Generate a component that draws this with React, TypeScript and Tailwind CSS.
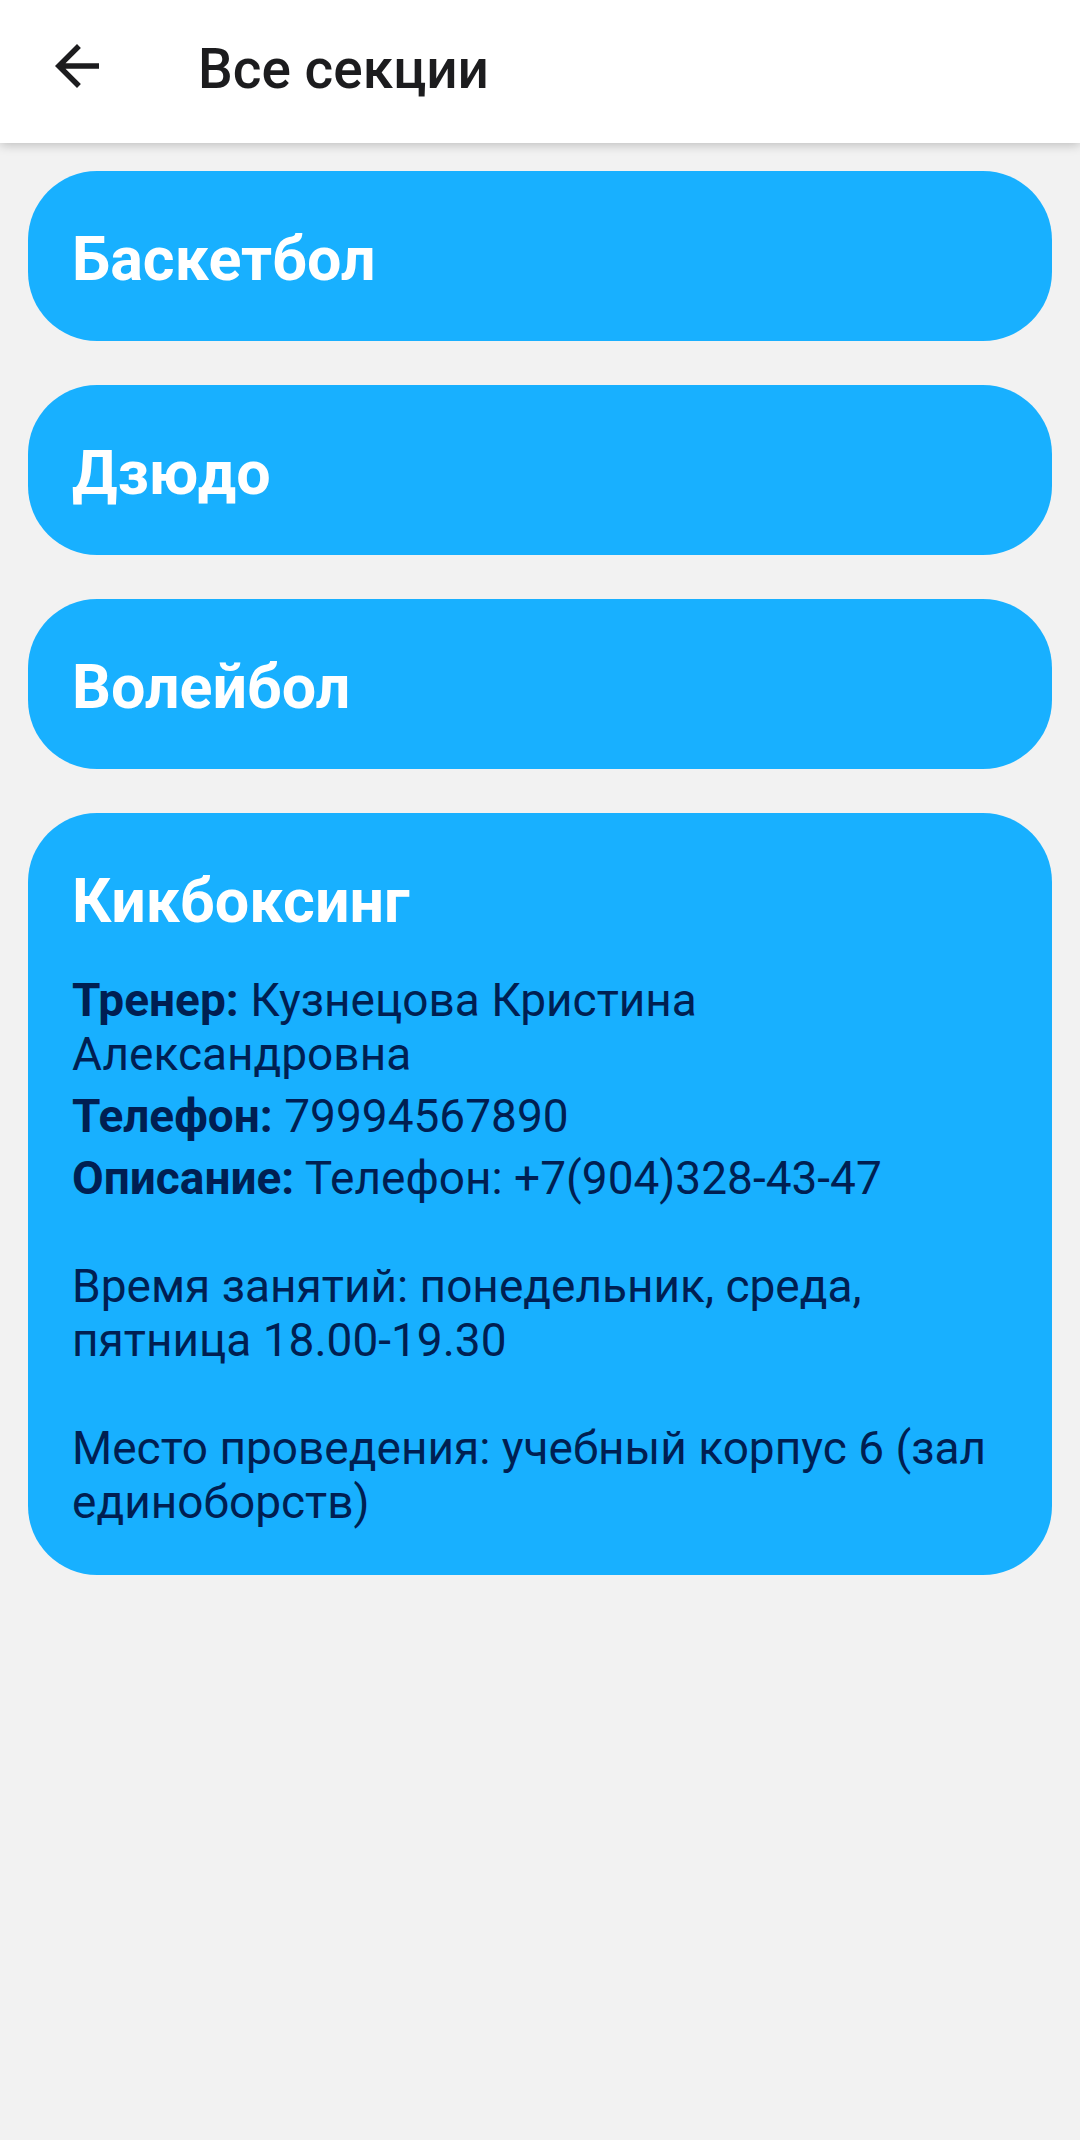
import type { ReactNode } from "react";

type Detail = { label: string; value: string };

const sections: { name: string; details?: Detail[] }[] = [
  { name: "Баскетбол" },
  { name: "Дзюдо" },
  { name: "Волейбол" },
  {
    name: "Кикбоксинг",
    details: [
      { label: "Тренер:", value: "Кузнецова Кристина Александровна" },
      { label: "Телефон:", value: "79994567890" },
      {
        label: "Описание:",
        value:
          "Телефон: +7(904)328-43-47\n\nВремя занятий: понедельник, среда, пятница 18.00-19.30\n\nМесто проведения: учебный корпус 6 (зал единоборств)",
      },
    ],
  },
];

function Card({ name, children }: { name: string; children?: ReactNode }) {
  return (
    <section className="rounded-[69px] bg-[#18b0ff] px-11 pt-11 pb-[38px]">
      <h2>
        <button type="button" className="block w-full text-left text-[61px] leading-[88px] font-bold text-white">
          {name}
        </button>
      </h2>
      {children}
    </section>
  );
}

export default function App() {
  return (
    <div className="min-h-screen bg-[#f2f2f2] font-[Roboto,sans-serif]">
      <header className="flex h-[143px] items-start bg-white px-11 pt-[33px] shadow-[0_2px_10px_rgba(0,0,0,0.22)]">
        <button type="button" aria-label="Назад" className="mr-[88px]">
          <svg viewBox="0 0 24 24" className="size-[66px]" fill="#1c1c1e">
            <path d="M20 11H7.83l5.59-5.59L12 4l-8 8 8 8 1.41-1.41L7.83 13H20v-2z" />
          </svg>
        </button>
        <h1 className="text-[55px] leading-[72px] font-medium text-[#1c1c1e]">Все секции</h1>
      </header>
      <main className="flex flex-col gap-11 px-7 pt-7">
        {sections.map((section) => (
          <Card key={section.name} name={section.name}>
            {section.details && (
              <div className="flex flex-col gap-2 pt-7 pb-2 text-[46px] leading-[54px] text-[#001f52]">
                {section.details.map((detail) => (
                  <p key={detail.label} className="whitespace-pre-line">
                    <b className="font-bold">{detail.label}</b> {detail.value}
                  </p>
                ))}
              </div>
            )}
          </Card>
        ))}
      </main>
    </div>
  );
}
